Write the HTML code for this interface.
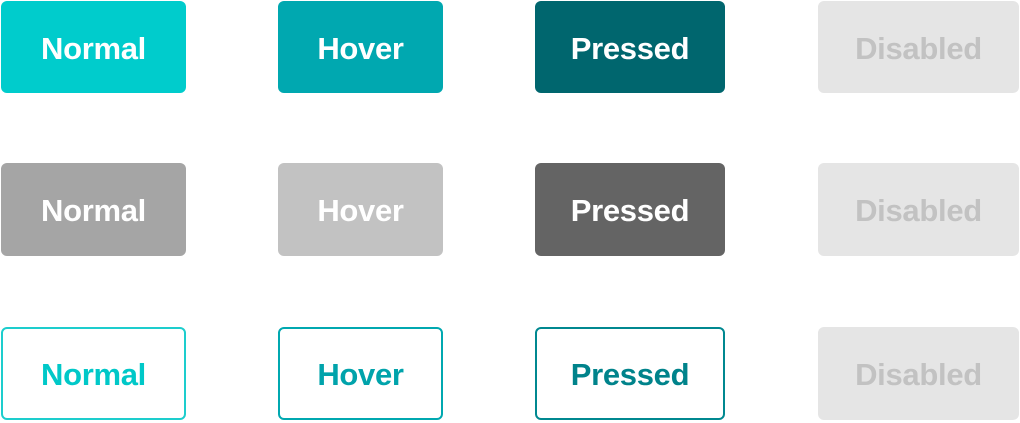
<!DOCTYPE html><html><head><style>
body{margin:0;width:1020px;height:423px;background:#fff;position:relative;overflow:hidden;font-family:"Liberation Sans",sans-serif}
.b{position:absolute;box-sizing:border-box;border-radius:6px;display:flex;align-items:center;justify-content:center;font-weight:bold;font-size:31px;letter-spacing:-0.3px;color:#fff;padding-top:3px}
.c1{left:1px;width:185px}.c2{left:278px;width:165px}.c3{left:535px;width:190px}.c4{left:818px;width:201px}
.r1{top:1px;height:92px}.r2{top:163px;height:93px}.r3{top:327px;height:93px}
.d{background:#e5e5e5;color:#c2c2c2}
</style></head><body>
<div class="b c1 r1" style="background:#00cccc">Normal</div>
<div class="b c2 r1" style="background:#00a8b0">Hover</div>
<div class="b c3 r1" style="background:#00666e">Pressed</div>
<div class="b c4 r1 d">Disabled</div>
<div class="b c1 r2" style="background:#a5a5a5">Normal</div>
<div class="b c2 r2" style="background:#c2c2c2">Hover</div>
<div class="b c3 r2" style="background:#646464">Pressed</div>
<div class="b c4 r2 d">Disabled</div>
<div class="b c1 r3" style="border:2px solid #1dcdcd;color:#00c8c8">Normal</div>
<div class="b c2 r3" style="border:2px solid #00a8b0;color:#00a3ab">Hover</div>
<div class="b c3 r3" style="border:2px solid #008890;color:#00838b">Pressed</div>
<div class="b c4 r3 d">Disabled</div>
</body></html>
